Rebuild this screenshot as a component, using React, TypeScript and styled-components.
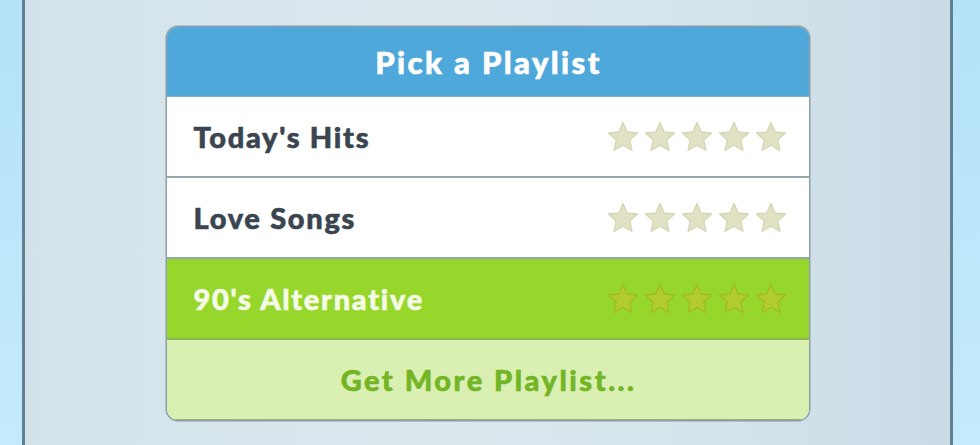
import React from "react";
import styled, { createGlobalStyle } from "styled-components";

const Global = createGlobalStyle`
  html, body { margin: 0; padding: 0; }
  body { width: 980px; height: 445px; overflow: hidden; font-family: "Lato", "DejaVu Sans", sans-serif; }
`;

const Screen = styled.div`
  display: flex;
  width: 980px;
  height: 445px;
`;

const SideStrip = styled.div<{ $w: number }>`
  width: ${(p) => p.$w}px;
  flex: none;
  background: linear-gradient(180deg, #b4e2f8 0%, #c4eafb 100%);
`;

const Edge = styled.div`
  width: 3px;
  flex: none;
  background: #5f7f93;
`;

const Panel = styled.div`
  flex: 1;
  display: flex;
  justify-content: center;
  align-items: flex-start;
  padding-top: 27px;
  background: linear-gradient(90deg, #d3e2ea 0%, #dbe7ed 45%, #d4e3eb 75%, #c9dce6 100%);
`;

const Card = styled.div`
  width: 642px;
  border-radius: 11px;
  overflow: hidden;
  box-shadow: 0 0 0 1.5px #8c9ea8;
  display: flex;
  flex-direction: column;
`;

const Header = styled.div`
  height: 70px;
  background: #4fa8da;
  color: #ffffff;
  display: flex;
  align-items: center;
  justify-content: center;
  font-weight: 900;
  font-size: 31px;
  letter-spacing: 2.4px;
  -webkit-text-stroke: 0.6px currentColor;
  padding-left: 2px;
  border-bottom: 1px solid #7fb2cc;
  box-sizing: border-box;
`;

const Row = styled.div<{ $active?: boolean }>`
  height: 81px;
  box-sizing: border-box;
  display: flex;
  align-items: center;
  justify-content: space-between;
  padding: 0 22px 0 27px;
  background: ${(p) => (p.$active ? "#97d62a" : "#ffffff")};
  color: ${(p) => (p.$active ? "#f4fbe6" : "#3a4550")};
  border-bottom: 2px solid ${(p) => (p.$active ? "#8fb65a" : "#9aa6ad")};
  font-weight: 900;
  font-size: 29px;
  letter-spacing: 1.7px;
  -webkit-text-stroke: 0.6px currentColor;
`;

const Stars = styled.div`
  display: flex;
  gap: 5px;
`;

const Footer = styled.div`
  height: 80px;
  background: #d9f0b2;
  color: #74b526;
  display: flex;
  align-items: center;
  justify-content: center;
  font-weight: 900;
  font-size: 29px;
  letter-spacing: 2.5px;
  -webkit-text-stroke: 0.6px currentColor;
  padding-left: 2px;
  border-bottom: 1px solid #95ae7a;
  box-sizing: border-box;
`;

const Star: React.FC<{ active?: boolean }> = ({ active }) => (
  <svg width="32" height="32" viewBox="0 0 32 32">
    <polygon
      points="16,1.5 20.2,11 30.5,12 22.8,19 25,29.5 16,24.2 7,29.5 9.2,19 1.5,12 11.8,11"
      fill={active ? "#b2cb2e" : "#e1e1c4"}
      stroke={active ? "#9fbb26" : "#d6d6b6"}
      strokeWidth="1.3"
      strokeLinejoin="round"
    />
  </svg>
);

const StarRating: React.FC<{ active?: boolean }> = ({ active }) => (
  <Stars>
    {[0, 1, 2, 3, 4].map((i) => (
      <Star key={i} active={active} />
    ))}
  </Stars>
);

const playlists = [
  { name: "Today's Hits", active: false },
  { name: "Love Songs", active: false },
  { name: "90's Alternative", active: true },
];

export default function App() {
  return (
    <>
      <Global />
      <Screen>
        <SideStrip $w={22} />
        <Edge />
        <Panel>
          <Card>
            <Header>Pick a Playlist</Header>
            {playlists.map((p) => (
              <Row key={p.name} $active={p.active}>
                <span>{p.name}</span>
                <StarRating active={p.active} />
              </Row>
            ))}
            <Footer>Get More Playlist...</Footer>
          </Card>
        </Panel>
        <Edge />
        <SideStrip $w={27} />
      </Screen>
    </>
  );
}
